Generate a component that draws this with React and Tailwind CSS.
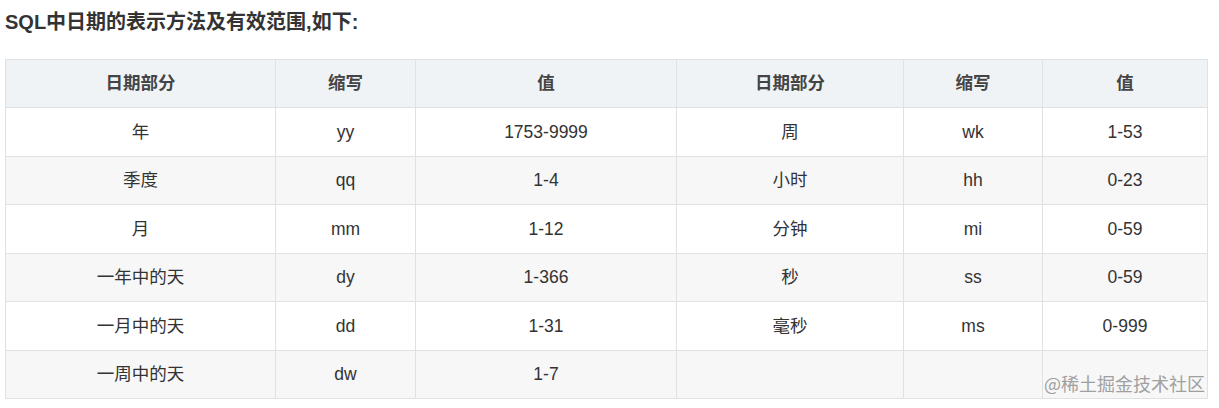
import React from 'react';

const cols = ['w-[270px]', 'w-[140px]', 'w-[261px]', 'w-[227px]', 'w-[139px]', 'w-[165px]'];

const rows = [
  ['年', 'yy', '1753-9999', '周', 'wk', '1-53'],
  ['季度', 'qq', '1-4', '小时', 'hh', '0-23'],
  ['月', 'mm', '1-12', '分钟', 'mi', '0-59'],
  ['一年中的天', 'dy', '1-366', '秒', 'ss', '0-59'],
  ['一月中的天', 'dd', '1-31', '毫秒', 'ms', '0-999'],
  ['一周中的天', 'dw', '1-7', '', '', ''],
];

const heads = ['日期部分', '缩写', '值', '日期部分', '缩写', '值'];

export default function App() {
  return (
    <div
      className="relative w-[1219px] h-[408px] bg-white text-[#333] overflow-hidden"
      style={{ fontFamily: '"Liberation Sans", Arial, "Noto Sans CJK SC", sans-serif' }}
    >
      <h3 className="pl-[5px] pt-[9px] h-[59px] text-[20px] font-bold leading-[26px] text-[#333]">
        SQL中日期的表示方法及有效范围,如下:
      </h3>

      <table className="ml-[5px] border-collapse table-fixed w-[1202px] text-[17.5px]">
        <colgroup>
          {cols.map((c, i) => (
            <col key={i} className={c} />
          ))}
        </colgroup>
        <thead>
          <tr className="h-[48px] bg-[#eff3f5]">
            {heads.map((h, i) => (
              <th key={i} className="border border-[#dfe2e5] font-bold text-center text-[#444]">
                {h}
              </th>
            ))}
          </tr>
        </thead>
        <tbody>
          {rows.map((r, ri) => (
            <tr key={ri} className={ri % 2 === 1 ? 'h-[48.5px] bg-[#f7f7f7]' : 'h-[48.5px] bg-white'}>
              {r.map((c, ci) => (
                <td key={ci} className="border border-[#dfe2e5] text-center">
                  {c}
                </td>
              ))}
            </tr>
          ))}
        </tbody>
      </table>

      {/* watermark */}
      <div className="absolute right-[14px] top-[372px] text-[18px] leading-[22px] text-[#a0a0a0]" style={{ fontFamily: '"Noto Sans CJK SC", sans-serif' }}>
        @稀土掘金技术社区
      </div>
    </div>
  );
}
